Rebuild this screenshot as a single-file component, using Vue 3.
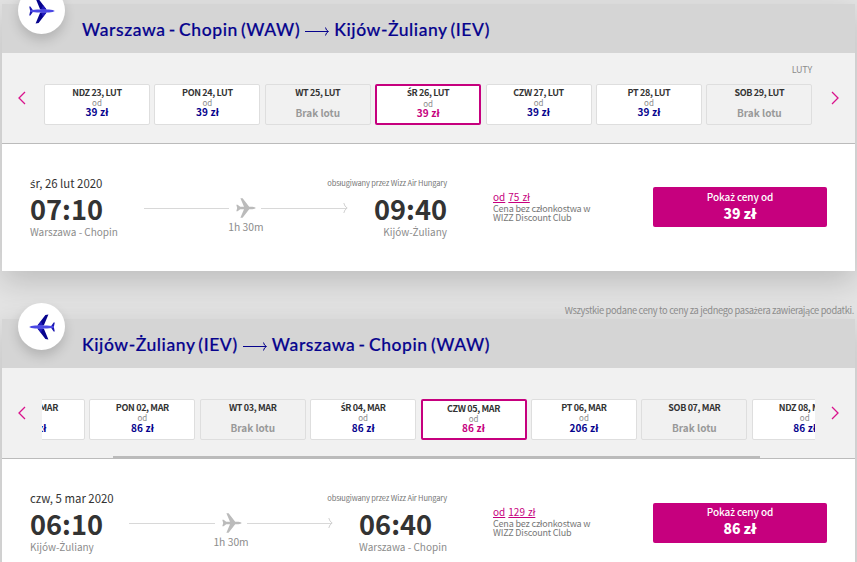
<script setup>
import { ref, h } from 'vue'

const flights = ref([
  {
    id: 'outbound',
    from: 'Warszawa - Chopin (WAW)',
    to: 'Kijów-Żuliany (IEV)',
    month: 'LUTY',
    selected: 3,
    days: [
      { label: 'NDZ 23, LUT', price: '39 zł' },
      { label: 'PON 24, LUT', price: '39 zł' },
      { label: 'WT 25, LUT', price: null },
      { label: 'ŚR 26, LUT', price: '39 zł' },
      { label: 'CZW 27, LUT', price: '39 zł' },
      { label: 'PT 28, LUT', price: '39 zł' },
      { label: 'SOB 29, LUT', price: null }
    ],
    date: 'śr, 26 lut 2020',
    departure: { time: '07:10', city: 'Warszawa - Chopin' },
    arrival: { time: '09:40', city: 'Kijów-Żuliany' },
    duration: '1h 30m',
    clubPrice: '75 zł',
    price: '39 zł'
  },
  {
    id: 'return',
    from: 'Kijów-Żuliany (IEV)',
    to: 'Warszawa - Chopin (WAW)',
    month: '',
    selected: 4,
    days: [
      { label: 'NDZ 01, MAR', price: '206 zł' },
      { label: 'PON 02, MAR', price: '86 zł' },
      { label: 'WT 03, MAR', price: null },
      { label: 'ŚR 04, MAR', price: '86 zł' },
      { label: 'CZW 05, MAR', price: '86 zł' },
      { label: 'PT 06, MAR', price: '206 zł' },
      { label: 'SOB 07, MAR', price: null },
      { label: 'NDZ 08, MAR', price: '86 zł' }
    ],
    date: 'czw, 5 mar 2020',
    departure: { time: '06:10', city: 'Kijów-Żuliany' },
    arrival: { time: '06:40', city: 'Warszawa - Chopin' },
    duration: '1h 30m',
    clubPrice: '129 zł',
    price: '86 zł'
  }
])

const selectDay = (flight, index) => {
  if (!flight.days[index].price) return
  flight.selected = index
}

const Pl = (props) =>
  h('span', props.text.split(/([ŚśŻż])/).map((part, i) =>
    i % 2 ? h('span', { class: 'pl-letter' }, part) : part
  ))
Pl.props = ['text']
</script>

<template>
  <div class="page">
    <section v-for="flight in flights" :key="flight.id" class="flight" :class="flight.id">
      <p v-if="flight.id === 'return'" class="note">
        <Pl text="Wszystkie podane ceny to ceny za jednego pasażera zawierające podatki." />
      </p>
      <div class="card">
        <header class="card-header">
          <span class="badge">
            <svg class="badge-plane" viewBox="0 0 26 26">
              <path d="M11.2 11.6 L17.6 11.6 L9.6 1 L6.6 .4 Z M11.2 14.4 L17.6 14.4 L9.6 25 L6.6 25.6 Z" fill="#06038d" />
              <path d="M3.8 12 L1.4 8.4 H.2 L1.2 13 L.2 17.6 H1.4 L3.8 14 L6 13 Z" fill="#1b17b0" />
              <path d="M12 11.5 H17.6 L14 7.2 Z M12 14.5 H17.6 L14 18.8 Z" fill="#2019bd" />
              <path d="M1 12.2 L8 11.5 H20 Q24.5 11.8 25.8 13 Q24.5 14.2 20 14.5 H8 L1 13.8 Z" fill="#4a48e4" />
            </svg>
          </span>
          <h2 class="route-title">
            <span class="place">{{ flight.from }}</span>
            <svg class="title-arrow" viewBox="0 0 24 10">
              <path d="M0 5.5 H23 M20.5 1.5 Q21 4.5 23.5 5.5 Q21 6.5 20.5 9.5" />
            </svg>
            <span class="place">{{ flight.to }}</span>
          </h2>
        </header>

        <div class="calendar">
          <div class="month">{{ flight.month }}</div>
          <div class="days-row">
            <button class="chevron">
              <svg viewBox="0 0 8 14"><path d="M7 1 L1 7 L7 13" /></svg>
            </button>
            <div class="days-window">
              <div class="days">
                <div
                  v-for="(day, i) in flight.days"
                  :key="day.label"
                  class="day"
                  :class="{ selected: i === flight.selected, empty: !day.price }"
                  @click="selectDay(flight, i)"
                >
                  <Pl class="day-label" :text="day.label" />
                  <template v-if="day.price">
                    <span class="day-from">od</span>
                    <span class="day-price">{{ day.price }}</span>
                  </template>
                  <span v-else class="no-flight">Brak lotu</span>
                </div>
              </div>
            </div>
            <button class="chevron">
              <svg viewBox="0 0 8 14"><path d="M1 1 L7 7 L1 13" /></svg>
            </button>
          </div>
          <div v-if="flight.id === 'return'" class="scroll-thumb"></div>
        </div>

        <div class="details">
          <div class="journey">
            <div class="journey-top">
              <Pl class="date" :text="flight.date" />
              <span class="carrier">obsługiwany przez Wizz Air Hungary</span>
            </div>
            <div class="journey-main">
              <div class="stop">
                <span class="time">{{ flight.departure.time }}</span>
                <Pl class="city" :text="flight.departure.city" />
              </div>
              <div class="path">
                <div class="path-line">
                  <i class="line"></i>
                  <svg class="path-plane" viewBox="0 0 20 20">
                    <path d="M.3 6.8 H1.6 L4.2 8.8 H8 L4.4 .3 H6.6 L13.2 8.8 H16.5 Q19 9 19.8 10 Q19 11 16.5 11.2 H13.2 L6.6 19.7 H4.4 L8 11.2 H4.2 L1.6 13.2 H.3 L1.2 10 Z" />
                  </svg>
                  <i class="line"></i>
                  <svg class="path-head" viewBox="0 0 5 12">
                    <path d="M.8 1 Q1.6 4.8 4.2 6 Q1.6 7.2 .8 11" />
                  </svg>
                </div>
                <span class="duration">{{ flight.duration }}</span>
              </div>
              <div class="stop">
                <span class="time">{{ flight.arrival.time }}</span>
                <Pl class="city right" :text="flight.arrival.city" />
              </div>
            </div>
          </div>
          <div class="club">
            <div class="club-price"><u>od</u> <u>{{ flight.clubPrice }}</u></div>
            <div class="club-text">Cena bez członkostwa w<br>WIZZ Discount Club</div>
          </div>
          <button class="show-price">
            <Pl class="show-label" text="Pokaż ceny od" />
            <span class="show-value">{{ flight.price }}</span>
          </button>
        </div>
      </div>
    </section>
  </div>
</template>

<style>
body {
  margin: 0;
  background: #e4e4e4;
}

.pl-letter {
  font-family: 'Noto Sans', sans-serif;
  line-height: 0;
}
</style>

<style scoped>
.page {
  height: 562px;
  padding: 4px 2px 0;
  box-sizing: border-box;
  overflow: hidden;
  background: #e4e4e4;
  font-family: 'Noto Sans CJK SC', 'Noto Sans', sans-serif;
  color: #333;
}

button {
  border: 0;
  padding: 0;
  font-family: inherit;
  cursor: pointer;
}

.note {
  margin: 0;
  height: 48px;
  padding: 32px 1px 0 0;
  box-sizing: border-box;
  text-align: right;
  font-size: 9.3px;
  line-height: 14px;
  letter-spacing: -0.34px;
  color: #8c8c8c;
  white-space: nowrap;
}

.card {
  background: #fff;
  box-shadow: 0 10px 30px rgba(0, 0, 0, 0.18);
}

.card-header {
  position: relative;
  height: 49px;
  padding: 2px 0 0 80px;
  box-sizing: border-box;
  display: flex;
  align-items: center;
  background: #d5d5d5;
}

.badge {
  position: absolute;
  left: 16px;
  top: -16px;
  width: 47px;
  height: 47px;
  display: flex;
  align-items: center;
  justify-content: center;
  border-radius: 50%;
  background: #fff;
  box-shadow: 0 6px 12px rgba(0, 0, 0, 0.16);
}

.outbound .badge {
  top: -17px;
}

.badge-plane {
  width: 26px;
  height: 26px;
}

.return .badge-plane {
  transform: scaleX(-1);
}

.route-title {
  margin: 0;
  display: flex;
  align-items: center;
  font-family: Lato, 'Noto Sans', sans-serif;
  font-size: 17.5px;
  font-weight: 500;
  line-height: 24px;
  letter-spacing: 0.58px;
  word-spacing: -1.8px;
  color: #06038d;
  -webkit-text-stroke: 0.2px #06038d;
  white-space: nowrap;
}

.title-arrow {
  width: 24px;
  height: 10px;
  margin: 2px 5px 0;
  fill: none;
  stroke: #06038d;
  stroke-width: 1;
}

.calendar {
  height: 91px;
  box-sizing: border-box;
  border-bottom: 1px solid #bbb;
  background: #f1f1f1;
  display: flex;
  flex-direction: column;
}

.month {
  height: 31px;
  padding: 10px 43px 0 0;
  box-sizing: border-box;
  text-align: right;
  font-size: 9px;
  line-height: 14px;
  letter-spacing: -0.2px;
  color: #8c8c8c;
}

.days-row {
  display: flex;
  align-items: flex-start;
}

.chevron {
  width: 40px;
  height: 27px;
  flex: none;
  display: flex;
  align-items: center;
  justify-content: center;
  background: none;
}

.chevron svg {
  width: 8px;
  height: 14px;
  fill: none;
  stroke: #d9128c;
  stroke-width: 1.3;
}

.days-window {
  width: 773px;
  flex: none;
  overflow: hidden;
}

.days {
  display: flex;
  gap: 4.4px;
  margin-left: 2px;
}

.return .days {
  margin-left: -63px;
}

.day {
  width: 106px;
  height: 41px;
  flex: none;
  box-sizing: border-box;
  border: 1px solid #dedede;
  border-radius: 2px;
  background: #fff;
  display: flex;
  flex-direction: column;
  align-items: center;
  padding-top: 2px;
  white-space: nowrap;
}

.day.empty {
  background: #f1f1f1;
}

.day.selected {
  border: 2px solid #c6007e;
  padding-top: 1px;
}

.return .day.selected {
  padding-top: 2px;
}

.day-label {
  font-size: 9px;
  font-weight: 700;
  line-height: 12px;
  letter-spacing: -0.35px;
}

.day-from {
  font-size: 8px;
  line-height: 8px;
  color: #8c8c8c;
}

.outbound .selected .day-from {
  margin-top: 1px;
}

.day-price,
.no-flight {
  font-size: 10px;
  font-weight: 700;
  line-height: 12px;
  letter-spacing: 0.15px;
  color: #06038d;
}

.outbound .day-price {
  margin-top: -1px;
}

.return .selected .day-price {
  margin-top: -1px;
}

.selected .day-price {
  color: #c6007e;
}

.no-flight {
  margin-top: 8px;
  letter-spacing: 0;
  color: #999;
}

.scroll-thumb {
  width: 647px;
  height: 3px;
  flex: none;
  margin: auto 0 -1px 111px;
  background: #bbb;
}

.details {
  height: 127px;
  padding: 31px 28px 0;
  box-sizing: border-box;
  display: flex;
  align-items: flex-start;
}

.journey {
  width: 417px;
  flex: none;
}

.journey-top {
  display: flex;
  justify-content: space-between;
  height: 16px;
}

.date {
  font-size: 11.4px;
  line-height: 16px;
}

.carrier {
  font-size: 7.5px;
  line-height: 16px;
  letter-spacing: -0.15px;
  color: #777;
}

.journey-main {
  display: flex;
  gap: 26px;
}

.stop {
  display: flex;
  flex-direction: column;
  white-space: nowrap;
}

.time {
  font-size: 27.2px;
  font-weight: 700;
  line-height: 34px;
}

.city {
  font-size: 10px;
  line-height: 14px;
  color: #8c8c8c;
}

.city.right {
  text-align: right;
}

.path {
  flex: 1;
  display: flex;
  flex-direction: column;
}

.path-line {
  height: 20px;
  margin-top: 7px;
  display: flex;
  align-items: center;
}

.line {
  flex: 1;
  height: 1px;
  background: #d8d8d8;
}

.path-plane {
  width: 20px;
  height: 20px;
  margin: 0 5px 0 7px;
  fill: #bbb;
}

.path-head {
  width: 5px;
  height: 12px;
  margin-left: -4px;
  fill: none;
  stroke: #d0d0d0;
}

.duration {
  text-align: center;
  font-size: 10.3px;
  line-height: 18px;
  color: #8c8c8c;
}

.club {
  width: 160px;
  padding: 15px 0 0 46px;
  box-sizing: border-box;
  flex: none;
  white-space: nowrap;
}

.club-price {
  font-size: 10px;
  line-height: 13px;
  word-spacing: 0.8px;
  color: #c6007e;
}

.club-text {
  padding-top: 1px;
  font-size: 9px;
  line-height: 9px;
  letter-spacing: -0.18px;
  color: #777;
}

.show-price {
  width: 174px;
  height: 40px;
  margin: 12px 0 0 auto;
  padding-bottom: 2px;
  box-sizing: border-box;
  border-radius: 2px;
  background: #c6007e;
  color: #fff;
  display: flex;
  flex-direction: column;
  align-items: center;
  justify-content: center;
}

.return .show-price {
  margin-top: 13px;
  padding-bottom: 4px;
}

.show-label {
  font-size: 10px;
  font-weight: 500;
  line-height: 14px;
  letter-spacing: -0.1px;
}

.show-value {
  font-size: 14px;
  font-weight: 900;
  line-height: 18px;
  letter-spacing: -0.1px;
}
</style>
